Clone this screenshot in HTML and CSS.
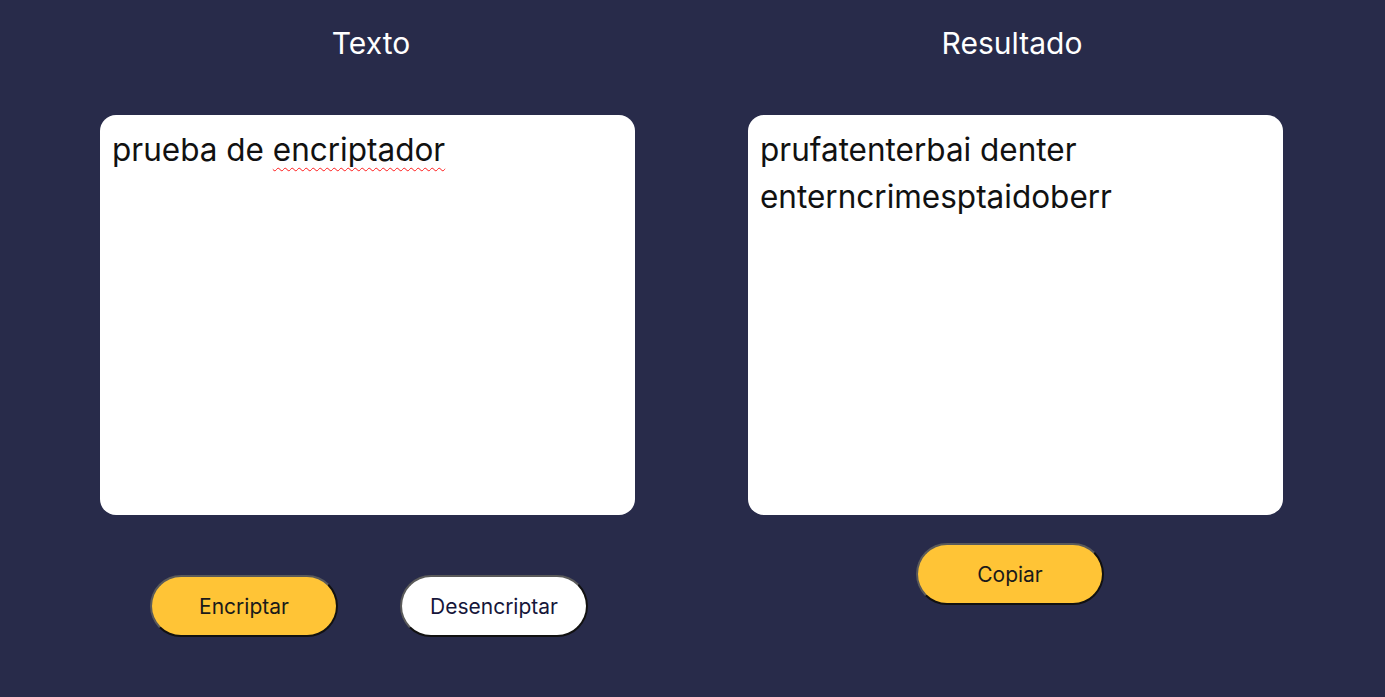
FILE: index.html
```html
<!DOCTYPE html>
<html lang="es">
<head>
<meta charset="utf-8">
<title>Encriptador</title>
<link rel="stylesheet" href="styles.css">
</head>
<body>
<main class="main">
  <section class="col col-left">
    <h2 class="title title-left">Texto</h2>
    <div class="box">prueba de <span class="misspelled">encriptador</span></div>
    <div class="actions actions-left">
      <button class="btn btn-yellow">Encriptar</button>
      <button class="btn btn-white">Desencriptar</button>
    </div>
  </section>
  <section class="col col-right">
    <h2 class="title title-right">Resultado</h2>
    <div class="box">prufatenterbai denter enterncrimesptaidoberr</div>
    <div class="actions actions-right">
      <button class="btn btn-yellow">Copiar</button>
    </div>
  </section>
</main>
</body>
</html>
```

FILE: styles.css
```css
html, body {
  margin: 0;
  padding: 0;
  background: #282b4a;
  height: 100%;
}
body {
  font-family: Inter, "Noto Sans", sans-serif;
  color: #fff;
}
.main {
  display: flex;
  gap: 113px;
  padding-top: 24px;
  padding-left: 100px;
}
.col {
  width: 535px;
  display: flex;
  flex-direction: column;
  align-items: center;
}
.title {
  margin: 0;
  font-weight: 400;
  font-size: 30px;
  line-height: 38px;
  height: 38px;
  margin-bottom: 53px;
}
.title-left {
  padding-left: 7px;
}
.title-right {
  padding-right: 7px;
}
.box {
  box-sizing: border-box;
  width: 535px;
  height: 400px;
  background: #fff;
  border-radius: 16px;
  padding: 11px 12px;
  font-size: 31.5px;
  line-height: 47px;
  color: #111;
}
.misspelled {
  text-decoration: underline wavy #ff1a1a;
  text-decoration-thickness: 1px;
  text-underline-offset: 6px;
  text-decoration-skip-ink: none;
}
.actions {
  display: flex;
  justify-content: center;
}
.actions-left {
  gap: 62px;
  margin-top: 60px;
  padding-left: 3px;
}
.actions-right {
  margin-top: 28px;
  padding-right: 11px;
}
.btn {
  box-sizing: border-box;
  width: 188px;
  height: 62px;
  border-radius: 31px;
  border: 2px solid;
  border-color: #5a5a5a #111 #111 #5a5a5a;
  font-family: Inter, "Noto Sans", sans-serif;
  font-size: 21px;
  color: #1a1a1a;
  cursor: pointer;
  padding: 0;
}
.btn-yellow {
  background: #ffc436;
}
.btn-white {
  background: #fff;
  color: #16163a;
}
```
